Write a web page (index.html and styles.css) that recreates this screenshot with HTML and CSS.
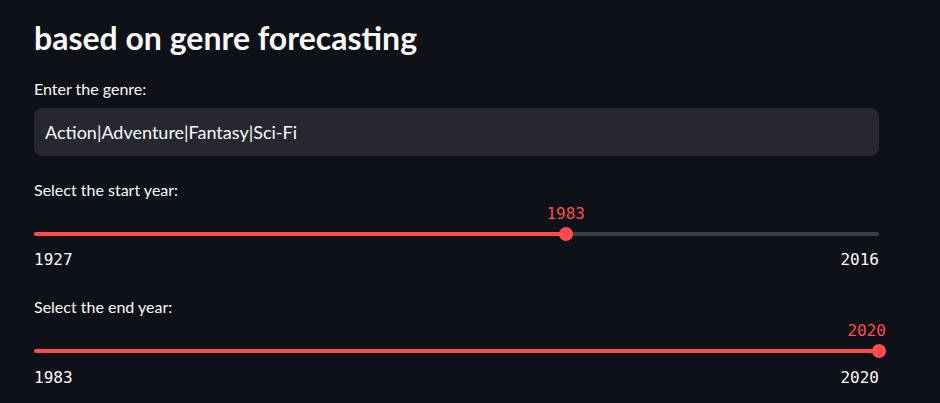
FILE: index.html
```html
<!DOCTYPE html>
<html>
<head>
<meta charset="utf-8">
<link rel="stylesheet" href="styles.css">
</head>
<body>
<main class="app">
  <h1 class="title">based on genre forecasting</h1>

  <section class="widget">
    <label class="label">Enter the genre:</label>
    <div class="input">Action|Adventure|Fantasy|Sci-Fi</div>
  </section>

  <section class="widget slider-widget">
    <label class="label">Select the start year:</label>
    <div class="slider">
      <div class="track"><div class="fill" style="width:62.92%"></div></div>
      <div class="thumb" style="left:62.92%"></div>
      <div class="value" style="left:62.92%">1983</div>
    </div>
    <div class="ticks"><span>1927</span><span>2016</span></div>
  </section>

  <section class="widget slider-widget">
    <label class="label">Select the end year:</label>
    <div class="slider">
      <div class="track"><div class="fill" style="width:100%"></div></div>
      <div class="thumb" style="left:100%"></div>
      <div class="value value-end">2020</div>
    </div>
    <div class="ticks"><span>1983</span><span>2020</span></div>
  </section>
</main>
</body>
</html>
```

FILE: styles.css
```css
html, body {
  margin: 0;
  padding: 0;
  background: #0e1117;
  color: #fafafa;
  font-family: Lato, "Noto Sans", sans-serif;
}

.app {
  width: 845px;
  padding: 14px 0 0 34px;
  display: flex;
  flex-direction: column;
}

.title {
  margin: 0;
  font-size: 32px;
  font-weight: 700;
  line-height: 48px;
  height: 48px;
}

.widget {
  display: flex;
  flex-direction: column;
}

.widget:first-of-type {
  margin-top: 17px;
}

.label {
  font-size: 16px;
  line-height: 20px;
  height: 20px;
}

.input {
  margin-top: 9px;
  height: 48px;
  box-sizing: border-box;
  background: #262730;
  border-radius: 8px;
  padding: 0 11px;
  display: flex;
  align-items: center;
  font-size: 18px;
}

.slider-widget {
  margin-top: 24px;
}

.slider-widget + .slider-widget {
  margin-top: 27px;
}

.slider {
  position: relative;
  margin-top: 3px;
  padding-top: 29px;
}

.track {
  height: 4px;
  border-radius: 2px;
  background: #3b3d47;
  overflow: hidden;
}

.fill {
  height: 100%;
  background: #ff4b4b;
}

.thumb {
  position: absolute;
  top: 24px;
  width: 14px;
  height: 14px;
  margin-left: -7px;
  border-radius: 50%;
  background: #ff4b4b;
}

.value {
  position: absolute;
  top: 1px;
  line-height: 20px;
  transform: translateX(-50%);
  font-family: "DejaVu Sans Mono", "Liberation Mono", monospace;
  font-size: 16px;
  color: #ff4b4b;
}

.value-end {
  left: auto;
  right: -7px;
  transform: none;
}

.ticks {
  margin-top: 14px;
  display: flex;
  justify-content: space-between;
  font-family: "DejaVu Sans Mono", "Liberation Mono", monospace;
  font-size: 16px;
  line-height: 20px;
}

.slider-widget + .slider-widget .ticks {
  margin-top: 15px;
}
```
